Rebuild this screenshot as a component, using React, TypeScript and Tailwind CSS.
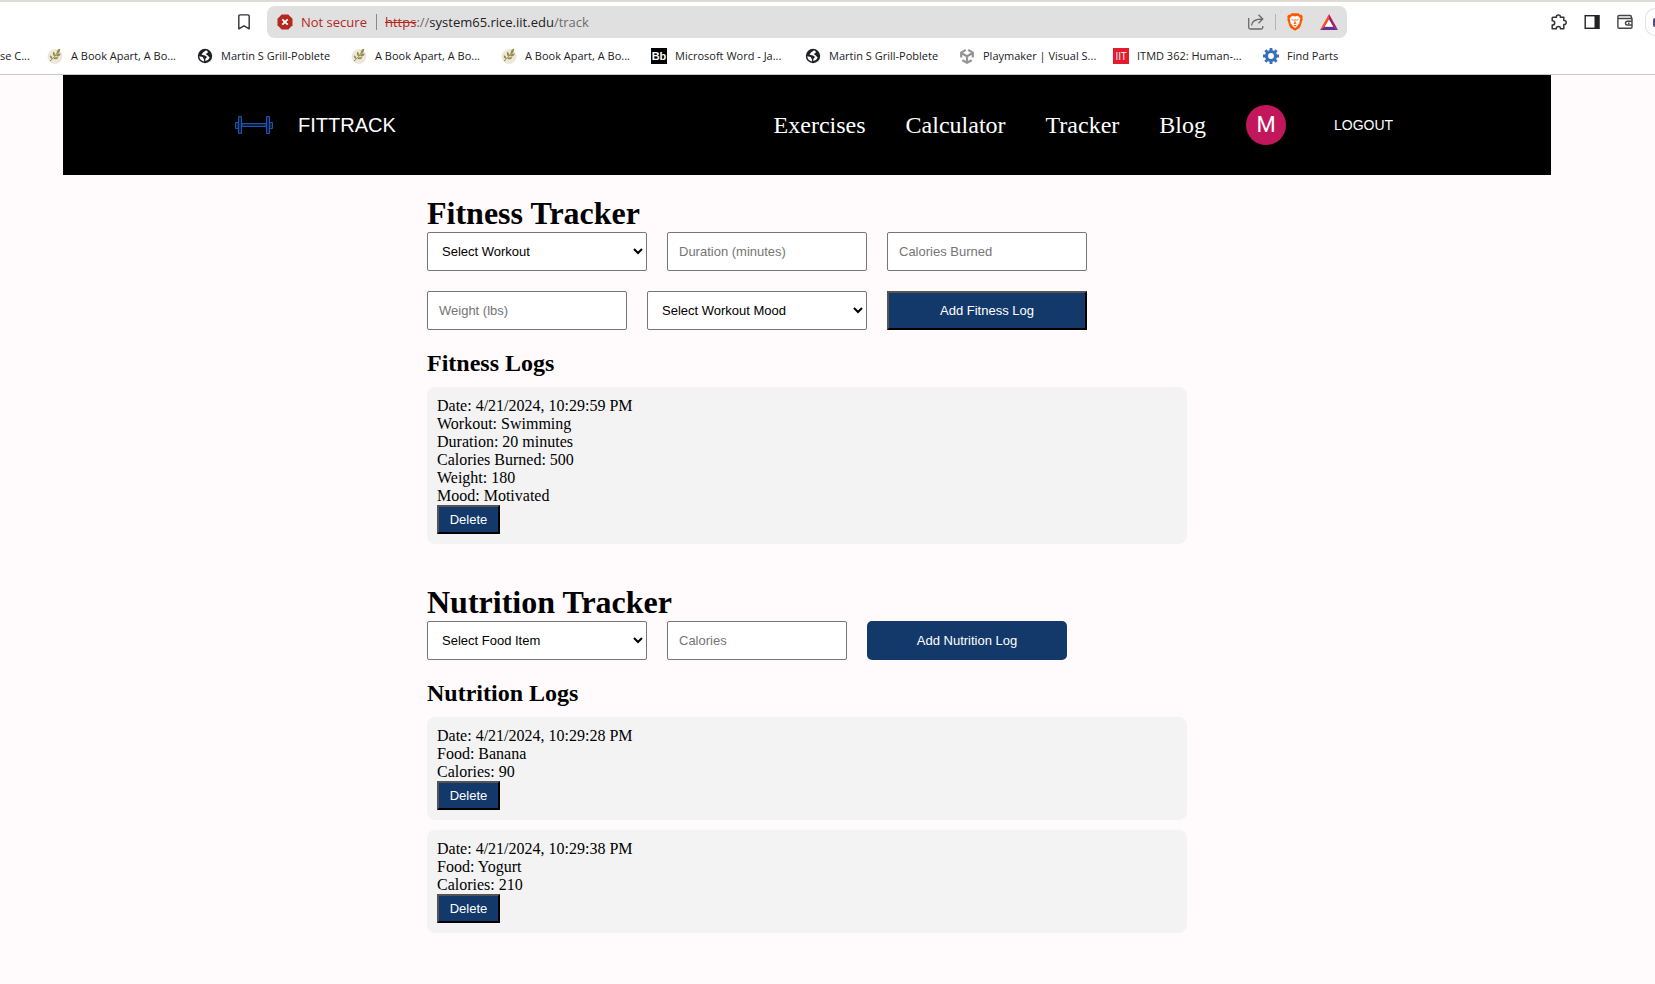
import React from "react";

function LeafIcon() {
  return (
    <svg viewBox="0 0 16 16" className="size-4">
      <circle cx="8" cy="8.5" r="7.5" fill="#ece9dc" />
      <path d="M3 13 C6 11 9 7 13 1" stroke="#8f8343" strokeWidth="1" fill="none" />
      <path
        d="M10 6 C9 3 11 1.500 12.500 0.500 C13.500 3 12.500 5 10 6Z M9 8 C10 5.500 12.500 5.500 14 5.500 C13 8 11 9 9 8Z M7.500 8.500 C5.500 7.500 5.500 5 6.500 3.800 C8.300 5 8.500 7 7.500 8.500Z M6.500 10.500 C7.500 8.800 10 9 11.500 9.500 C10 11.500 8 12 6.500 10.500Z M5 11 C3 10.500 2.500 8.500 3 7.300 C5 8 5.700 9.500 5 11Z"
        fill="#968a4b"
      />
    </svg>
  );
}

function GlobeIcon() {
  return (
    <svg viewBox="0 0 16 16" className="size-4">
      <circle cx="8" cy="8" r="7.200" fill="#202124" />
      <path
        d="M9.300 2.300 C7.800 2.600 7.800 4 6.300 4.100 C6.200 5.400 4.800 5.300 4.700 6.400 C5.800 7.400 8.200 6.600 8.700 8 C9.500 8.100 10 8.900 9.500 9.800 C8.800 10.600 8.200 11 8.100 12.600 C9.500 12.900 11.600 11.700 12.500 9.900 C12.800 8.600 11.300 8.400 10.800 7.400 C9.600 7 8.600 6.500 8.900 5.600 C9.800 5.300 10.700 5.200 10.900 4.200 C10.700 3.400 10 3 9.300 2.300Z M2.300 8.200 C3.800 8.600 5.700 8.500 6.100 9.800 C6.200 10.600 7 11 7.100 12 L7 13.400 C4.400 12.900 2.400 11 2.300 8.200Z"
        fill="#fff"
      />
    </svg>
  );
}

function CubeIcon() {
  return (
    <svg viewBox="0 0 16 16" className="size-4" stroke="#949494" fill="none" strokeWidth="2.200">
      <path d="M6.800 1.900 L2.200 4.600 V9.500 M9.200 1.900 L13.800 4.600 V9.500 M3.300 12.200 L8 14.700 L12.700 12.200" />
      <path d="M8 8.300 L2.200 5 M8 8.300 L13.800 5 M8 8.300 V14.500" />
    </svg>
  );
}

function GearIcon() {
  return (
    <svg viewBox="0 0 16 16" className="size-4" stroke="#3671b8" fill="none">
      <circle cx="8" cy="8" r="4.500" strokeWidth="3.200" />
      <path
        d="M8 0 V3 M8 13 V16 M0 8 H3 M13 8 H16 M2.300 2.300 L4.500 4.500 M11.500 11.500 L13.700 13.700 M13.700 2.300 L11.500 4.500 M4.500 11.500 L2.300 13.700"
        strokeWidth="2.800"
      />
    </svg>
  );
}

const bookmarks = [
  { label: "A Book Apart, A Bo...", icon: <LeafIcon />, slot: "w-[110px]" },
  { label: "Martin S Grill-Poblete", icon: <GlobeIcon />, slot: "w-[114px]" },
  { label: "A Book Apart, A Bo...", icon: <LeafIcon />, slot: "w-[110px]" },
  { label: "A Book Apart, A Bo...", icon: <LeafIcon />, slot: "w-[110px]" },
  {
    label: "Microsoft Word - Ja...",
    icon: (
      <span className="flex size-4 items-center justify-center bg-black font-['Liberation_Sans',sans-serif] text-[11px] font-bold text-white">
        Bb
      </span>
    ),
    slot: "w-[114px]",
  },
  { label: "Martin S Grill-Poblete", icon: <GlobeIcon />, slot: "w-[114px]" },
  { label: "Playmaker | Visual S...", icon: <CubeIcon />, slot: "w-[114px]" },
  {
    label: "ITMD 362: Human-...",
    icon: (
      <span className="flex size-4 items-center justify-center bg-[#e31b2f] font-['Open_Sans',sans-serif] text-[10px] text-white">
        IIT
      </span>
    ),
    slot: "w-[110px]",
  },
  { label: "Find Parts", icon: <GearIcon />, slot: "w-[60px]" },
];

function BrowserChrome() {
  return (
    <div className="overflow-hidden border-t-2 border-b border-t-[#e0dad7] border-b-[#c8c8c8] bg-white font-['Open_Sans','Noto_Sans',sans-serif]">
      <div className="flex items-center pt-1">
        <button aria-label="Bookmark this tab" className="ml-[236px]">
          <svg viewBox="0 0 16 16" className="size-4" fill="none" stroke="#333" strokeWidth="1.400">
            <path d="M2.800 2 Q2.800 0.900 4 0.900 H12 Q13.200 0.900 13.200 2 V14.800 L8 11.800 L2.800 14.800Z" strokeLinejoin="round" />
          </svg>
        </button>
        <div className="ml-[15px] flex h-8 w-[1080px] items-center rounded-lg bg-[#e0e0e0] pr-[9px] pl-[10px] text-sm">
          <svg viewBox="0 0 16 16" className="mr-2 size-4">
            <path d="M4.700 0.500 H11.300 L15.500 4.700 V11.300 L11.300 15.500 H4.700 L0.500 11.300 V4.700Z" fill="#b3291f" />
            <path d="M5.300 5.300 L10.700 10.700 M10.700 5.300 L5.300 10.700" stroke="#fff" strokeWidth="1.800" />
          </svg>
          <span className="w-[67px] whitespace-nowrap text-[13px] text-[#b3261e]">Not secure</span>
          <span className="mx-2 h-4 w-px bg-[#8a8a8a]" />
          <span className="flex-1 whitespace-nowrap text-[13px] text-[#6b6b6b]">
            <span className="text-[#b3261e] line-through">https</span>://<span className="text-[#202124]">system65.rice.iit.edu</span>/track
          </span>
          <button aria-label="Share">
            <svg viewBox="0 0 16 16" className="size-4" fill="none" stroke="#6a6a6a" strokeWidth="1.300">
              <path d="M0.700 4 V13.500 Q0.700 15 2.200 15 H13.300 Q14.800 15 14.800 13.500 V12" />
              <path d="M3.500 11.500 C3.800 7.500 7 5 14.500 5 M10.500 0.800 L14.800 5 L10.500 9.200" />
            </svg>
          </button>
          <span className="mx-[11px] h-4 w-px bg-[#b5b5b5]" />
          <button aria-label="Brave Shields">
            <svg viewBox="0 0 16 18" className="h-[18px] w-4">
              <path d="M4.500 0.300 H11.500 L13 1.800 L14.500 1.700 L15.800 3.500 L15.300 5 L15.700 6.200 L13.500 13.300 Q13 14.500 12 15.200 L8 17.800 L4 15.200 Q3 14.500 2.500 13.300 L0.300 6.200 L0.700 5 L0.200 3.500 L1.500 1.700 L3 1.800Z" fill="#ff5500" />
              <path d="M5 2.800 L8 3.400 L11 2.800 L13.300 5.500 L12.600 8.800 L12.300 10.800 L11 11.800 L10.500 13 L8 15 L5.500 13 L5 11.800 L3.700 10.800 L3.400 8.800 L2.700 5.500Z" fill="#fff" />
              <path d="M4 6 L6.700 6.800 L6.200 8Z M12 6 L9.300 6.800 L9.800 8Z M7.500 6 H8.500 L8.400 9.300 L9.500 10.200 L8 11.200 L6.500 10.200 L7.600 9.300Z M6.300 12.500 L8 11.900 L9.700 12.500 L8 13.400Z" fill="#ff5500" />
            </svg>
          </button>
          <button aria-label="Brave Rewards" className="ml-[17px]">
            <svg viewBox="0 0 18 16" className="h-4 w-[18px]">
              <path d="M9 0 L0 16 L5 12.600 L9 6Z" fill="#ff4724" />
              <path d="M9 0 L18 16 L13 12.600 L9 6Z" fill="#9e1f63" />
              <path d="M0 16 H18 L13 12.600 H5Z" fill="#662d91" />
              <path d="M9 5.500 L13.200 12.800 H4.800Z" fill="#fff" />
            </svg>
          </button>
        </div>
        <div className="ml-auto flex shrink-0 items-center gap-[17px]">
          <button aria-label="Extensions">
            <svg viewBox="0 0 16 16" className="size-4" fill="none" stroke="#333" strokeWidth="1.500">
              <path d="M2 3.200 H5.500 C5.200 1.800 6 0.900 7.400 0.900 C8.800 0.900 9.600 1.800 9.300 3.200 H12.800 V6.500 C14.200 6.300 15.200 7.200 15.200 8.500 C15.200 9.800 14.200 10.700 12.800 10.500 V14.700 H9.500 C9.500 13.200 8.700 12.500 7.400 12.500 C6.100 12.500 5.300 13.200 5.300 14.700 H1.200 V11 C2.800 11 3.700 10.200 3.700 8.900 C3.700 7.600 2.800 6.800 1.200 6.800 V4 Q1.200 3.200 2 3.200Z" strokeLinejoin="round" />
            </svg>
          </button>
          <button aria-label="Side panel">
            <svg viewBox="0 0 16 16" className="size-4">
              <rect x="1.200" y="1.700" width="13.600" height="12.600" fill="none" stroke="#222" strokeWidth="1.400" />
              <rect x="10.500" y="1" width="5" height="14" fill="#222" />
            </svg>
          </button>
          <button aria-label="Wallet">
            <svg viewBox="0 0 16 16" className="size-4" fill="none" stroke="#444" strokeWidth="1.400">
              <path d="M14.300 5 V2.800 Q14.300 1.500 13 1.500 H2.200 Q0.900 1.500 0.900 2.800 V13 Q0.900 14.300 2.200 14.300 H13.700 Q15 14.300 15 13 V4.500 H1" />
              <path d="M15 7.300 H10.500 Q8.500 7.300 8.500 9.200 Q8.500 11 10.500 11 H15 M11 9.200 H12.500" />
            </svg>
          </button>
          <span className="-ml-[5px] flex h-7 w-[10px] items-center justify-end rounded-l-full border-y border-l border-[#e2e2e2]">
            <span className="h-[9px] w-[2px] rounded-l-full bg-[#4c4f86]" />
          </span>
        </div>
      </div>
      <div className="flex h-9 items-center gap-4 text-[11px] whitespace-nowrap text-[#202124]">
        <a href="#" className="w-[31px]">se C...</a>
        {bookmarks.map((b, i) => (
          <a href="#" key={i} className="flex shrink-0 items-center gap-2">
            {b.icon}
            <span className={b.slot}>{b.label}</span>
          </a>
        ))}
      </div>
    </div>
  );
}

function SiteHeader() {
  return (
    <header className="mx-[63px] flex h-[100px] items-center justify-between bg-black pr-[155px] pl-[171px] text-white">
      <a href="#" className="flex items-center gap-6 font-['Liberation_Sans',sans-serif] text-xl">
        <svg viewBox="0 0 40 20" className="h-5 w-10" fill="#0a1f44" stroke="#2053ae" strokeWidth="1">
          <path d="M8 8.500 H32 V11.500 H8Z" />
          <path d="M1.500 7.500 H4.500 V13.500 H1.500Z M35.500 7.500 H38.500 V13.500 H35.500Z" />
          <path d="M4.500 1.500 H7.500 V18.500 H4.500Z M32.500 1.500 H35.500 V18.500 H32.500Z" />
        </svg>
        FITTRACK
      </a>
      <nav className="flex items-center gap-10 font-['Liberation_Serif',serif] text-2xl">
        <a href="#">Exercises</a>
        <a href="#">Calculator</a>
        <a href="#">Tracker</a>
        <a href="#">Blog</a>
        <span className="flex size-10 items-center justify-center rounded-full bg-[#c2185b] font-[Roboto,sans-serif] text-[22px]">M</span>
        <button className="w-[70px] pl-2 text-left font-['Liberation_Sans',sans-serif] text-sm">LOGOUT</button>
      </nav>
    </header>
  );
}

const control =
  "h-[39px] rounded-xs border border-[#767676] bg-white font-['Liberation_Sans',sans-serif] text-[13px]";
const outset =
  "border-2 border-black [border-style:outset] bg-[#13396b] font-['Liberation_Sans',sans-serif] text-[13px] text-white";

function Select({ label }: { label: string }) {
  return (
    <select aria-label={label} className={`${control} w-[220px] px-[10px] text-black`}>
      <option>{label}</option>
    </select>
  );
}

function Field({ label, width = "w-[200px]" }: { label: string; width?: string }) {
  return (
    <input aria-label={label} placeholder={label} className={`${control} ${width} px-[11px] placeholder:text-[#757575]`} />
  );
}

function LogCard({ lines }: { lines: string[] }) {
  return (
    <li className="rounded-lg bg-[#f3f3f3] p-[10px]">
      {lines.map((l) => (
        <p key={l}>{l}</p>
      ))}
      <button className={`${outset} block h-[29px] w-[63px]`}>Delete</button>
    </li>
  );
}

function Title({ children }: { children: React.ReactNode }) {
  return <h1 className="text-[32px] leading-[37px] font-bold">{children}</h1>;
}

function Subtitle({ children }: { children: React.ReactNode }) {
  return <h2 className="mt-5 mb-[10px] text-2xl leading-[27px] font-bold">{children}</h2>;
}

export default function App() {
  return (
    <div className="min-h-screen bg-[#fffbfc]">
      <BrowserChrome />
      <div className="pr-[41px]">
        <SiteHeader />
        <main className="mx-auto flex max-w-[760px] flex-col gap-10 py-5 font-['Liberation_Serif',serif] text-base leading-[18px] text-black">
          <section>
            <Title>Fitness Tracker</Title>
            <form className="flex max-w-[700px] flex-wrap gap-5">
              <Select label="Select Workout" />
              <Field label="Duration (minutes)" />
              <Field label="Calories Burned" />
              <Field label="Weight (lbs)" />
              <Select label="Select Workout Mood" />
              <button type="button" className={`${outset} h-[39px] w-[200px]`}>Add Fitness Log</button>
            </form>
            <Subtitle>Fitness Logs</Subtitle>
            <ul>
              <LogCard
                lines={[
                  "Date: 4/21/2024, 10:29:59 PM",
                  "Workout: Swimming",
                  "Duration: 20 minutes",
                  "Calories Burned: 500",
                  "Weight: 180",
                  "Mood: Motivated",
                ]}
              />
            </ul>
          </section>
          <section>
            <Title>Nutrition Tracker</Title>
            <form className="flex flex-wrap gap-5">
              <Select label="Select Food Item" />
              <Field label="Calories" width="w-[180px]" />
              <button
                type="button"
                className="h-[39px] w-[200px] rounded-[5px] bg-[#13396b] font-['Liberation_Sans',sans-serif] text-[13px] text-white"
              >
                Add Nutrition Log
              </button>
            </form>
            <Subtitle>Nutrition Logs</Subtitle>
            <ul className="flex flex-col gap-[10px]">
              <LogCard lines={["Date: 4/21/2024, 10:29:28 PM", "Food: Banana", "Calories: 90"]} />
              <LogCard lines={["Date: 4/21/2024, 10:29:38 PM", "Food: Yogurt", "Calories: 210"]} />
            </ul>
          </section>
        </main>
      </div>
    </div>
  );
}
